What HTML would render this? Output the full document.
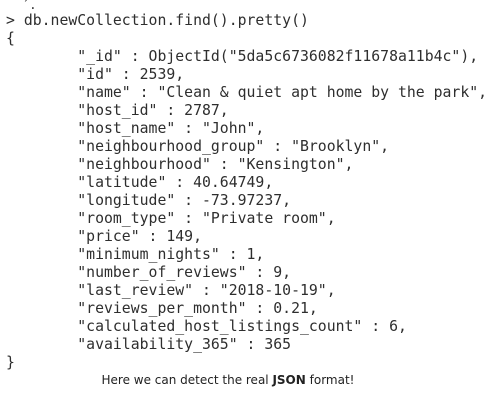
<!DOCTYPE html>
<html><head><meta charset="utf-8"><style>
html,body{margin:0;padding:0;background:#fff;width:502px;height:405px;overflow:hidden;position:relative}
pre{position:absolute;left:6px;top:12px;margin:0;font-family:"DejaVu Sans Mono","Liberation Mono",monospace;font-size:14.8px;line-height:18px;color:#2e2e2e;letter-spacing:0}
.cap{position:absolute;left:0;width:456px;top:373px;text-align:center;font-family:"DejaVu Sans","Liberation Sans",sans-serif;font-size:12px;color:#222}
.tick{position:absolute;left:22px;top:-2px;font-family:"DejaVu Sans Mono",monospace;font-size:12px;color:#2e2e2e}
</style></head><body>
<div class="tick">´.</div>
<pre>&gt; db.newCollection.find().pretty()
{
        "_id" : ObjectId("5da5c6736082f11678a11b4c"),
        "id" : 2539,
        "name" : "Clean &amp; quiet apt home by the park",
        "host_id" : 2787,
        "host_name" : "John",
        "neighbourhood_group" : "Brooklyn",
        "neighbourhood" : "Kensington",
        "latitude" : 40.64749,
        "longitude" : -73.97237,
        "room_type" : "Private room",
        "price" : 149,
        "minimum_nights" : 1,
        "number_of_reviews" : 9,
        "last_review" : "2018-10-19",
        "reviews_per_month" : 0.21,
        "calculated_host_listings_count" : 6,
        "availability_365" : 365
}</pre>
<div class="cap">Here we can detect the real <b>JSON</b> format!</div>
</body></html>
